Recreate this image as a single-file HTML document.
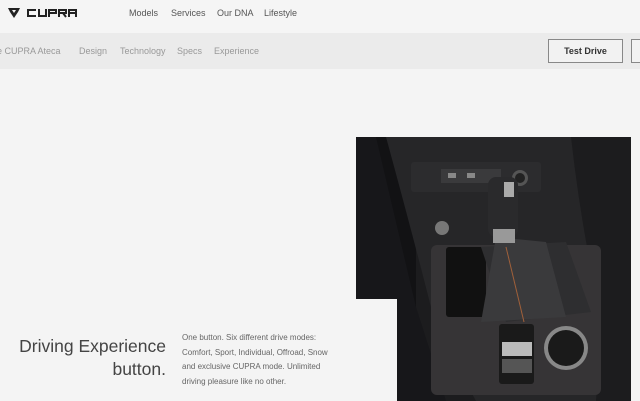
<!DOCTYPE html>
<html><head><meta charset="utf-8"><style>
*{margin:0;padding:0;box-sizing:border-box}
body{width:640px;height:401px;overflow:hidden;background:#f4f4f4;font-family:"Liberation Sans",sans-serif;position:relative}
.top{position:absolute;left:0;top:0;width:640px;height:33px;background:#f5f5f5}
.sub{position:absolute;left:0;top:33px;width:640px;height:36px;background:#ebebeb}
.t{position:absolute;font-size:9px;color:#555;white-space:nowrap}
.s{position:absolute;font-size:9px;color:#999;white-space:nowrap}
.btn{position:absolute;top:39px;height:24px;border:1px solid #888;background:#f2f2f2;font-size:9px;font-weight:bold;color:#333;text-align:center;line-height:22px}
</style></head><body>
<div class="top"></div>
<div class="sub"></div>
<svg style="position:absolute;left:8px;top:7px" width="72" height="12" viewBox="0 0 72 12">
<path d="M0 1 L12 1 L10 5 L6 11 L2 5 Z" fill="#222"/><path d="M4 3 L8 3 L6 6Z" fill="#f5f5f5"/>
<g fill="none" stroke="#222" stroke-width="2">
<path d="M28 3 H20 V9 H28"/><path d="M31 2 V9 H38 V2"/><path d="M41 10 V3 H48 V6 H41"/><path d="M51 10 V3 H58 V6 H51 M55 6 L58 10"/><path d="M61 10 V3 H68 V10 M61 6 H68"/>
</g></svg>
<div class="t" style="left:129px;top:8px">Models</div>
<div class="t" style="left:171px;top:8px">Services</div>
<div class="t" style="left:217px;top:8px">Our DNA</div>
<div class="t" style="left:264px;top:8px">Lifestyle</div>
<div class="s" style="left:-3px;top:46px">e CUPRA Ateca</div>
<div class="s" style="left:79px;top:46px">Design</div>
<div class="s" style="left:120px;top:46px">Technology</div>
<div class="s" style="left:177px;top:46px">Specs</div>
<div class="s" style="left:214px;top:46px">Experience</div>
<div class="btn" style="left:548px;width:75px">Test Drive</div>
<div class="btn" style="left:631px;width:20px"></div>
<svg style="position:absolute;left:356px;top:137px" width="275" height="264" viewBox="0 0 275 264">
<rect width="275" height="264" fill="#1c1c1e"/>
<rect x="0" y="0" width="60" height="264" fill="#121214"/>
<path d="M20 0 L60 170 L90 264 L0 264 L0 0Z" fill="#17171a"/>
<path d="M30 0 Q60 110 80 190 L120 264 L165 264 L240 264 L245 180 Q225 90 215 0Z" fill="#262628"/>
<rect x="55" y="25" width="130" height="30" rx="3" fill="#2c2c2e"/>
<rect x="85" y="32" width="60" height="14" fill="#3a3a3c"/>
<rect x="92" y="36" width="8" height="5" fill="#888"/><rect x="111" y="36" width="8" height="5" fill="#888"/>
<circle cx="164" cy="41" r="8" fill="#555"/><circle cx="164" cy="41" r="5" fill="#222"/>
<circle cx="86" cy="91" r="7" fill="#777"/>
<rect x="75" y="108" width="170" height="150" rx="6" fill="#363436"/>
<rect x="90" y="110" width="40" height="70" rx="3" fill="#111"/>
<path d="M125 110 L210 105 L235 175 L150 185 Z" fill="#2e2e30"/>
<path d="M140 100 L125 185 L210 180 L190 105Z" fill="#3a3a3c"/>
<path d="M150 110 L168 185" stroke="#a0603a" stroke-width="1"/>
<rect x="132" y="40" width="30" height="60" rx="8" fill="#2a2a2c"/>
<rect x="148" y="45" width="10" height="15" fill="#aaa"/>
<rect x="137" y="92" width="22" height="14" fill="#999"/>
<rect x="143" y="187" width="35" height="60" rx="3" fill="#1a1a1a"/>
<rect x="146" y="205" width="30" height="14" fill="#bbb"/>
<rect x="146" y="222" width="30" height="14" fill="#555"/>
<circle cx="210" cy="211" r="22" fill="#888"/><circle cx="210" cy="211" r="18" fill="#1a1a1a"/>
</svg>
<div style="position:absolute;left:356px;top:299px;width:41px;height:102px;background:#f4f4f4"></div>
<div style="position:absolute;right:474px;top:335px;font-size:17.5px;line-height:23px;color:#444;text-align:right;white-space:nowrap">Driving Experience<br>button.</div>
<div style="position:absolute;left:182px;top:331px;font-size:8px;line-height:14.5px;color:#666;width:160px">One button. Six different drive modes: Comfort, Sport, Individual, Offroad, Snow and exclusive CUPRA mode. Unlimited driving pleasure like no other.</div>
</body></html>
